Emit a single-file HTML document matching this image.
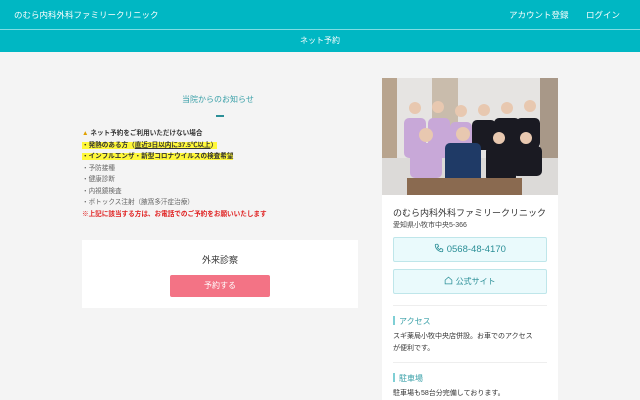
<!DOCTYPE html>
<html><head><meta charset="utf-8"><style>
*{margin:0;padding:0;box-sizing:border-box}
body{width:640px;height:400px;overflow:hidden;background:#f4f4f4;font-family:"Liberation Sans","Noto Sans CJK JP",sans-serif;color:#333}
.h1{position:absolute;left:0;top:0;width:640px;height:29px;background:#00b7c3;color:#fff;font-size:8.5px}
.h2{position:absolute;left:0;top:30px;width:640px;height:22px;background:#00b7c3;color:#fff;font-size:8px;text-align:center;line-height:22px}
.line{position:absolute;left:0;top:29px;width:640px;height:1px;background:#7fdde3}
.t{position:absolute;white-space:nowrap}
.notice{position:absolute;left:82px;top:128px;font-size:6.6px;line-height:11.5px;width:290px;font-weight:bold}
.hl{background:#fff83a}
.card{position:absolute;background:#fff}
.btn{position:absolute;left:393px;width:154px;height:25px;background:#eafafc;border:1px solid #bfe6ea;border-radius:2px;color:#2b8f97;text-align:center;line-height:23px}
</style></head><body>
<div class="h1"><span class="t" style="left:14px;top:9px">のむら内科外科ファミリークリニック</span><span class="t" style="left:509px;top:9px;font-size:8.5px">アカウント登録</span><span class="t" style="left:586px;top:9px;font-size:8.5px">ログイン</span></div>
<div class="line"></div>
<div class="h2">ネット予約</div>
<div class="t" style="left:182px;top:94px;font-size:8px;color:#3aa0a8">当院からのお知らせ</div>
<div style="position:absolute;left:216px;top:115px;width:8px;height:1.5px;background:#2b8f97"></div>
<div class="notice">
<div><span style="color:#e0a000">▲</span> ネット予約をご利用いただけない場合</div>
<div><span class="hl">・発熱のある方（<u>直近3日以内に37.5℃以上</u>）</span></div>
<div><span class="hl">・インフルエンザ・新型コロナウイルスの検査希望</span></div>
<div style="color:#666;font-weight:normal">・予防接種</div>
<div style="color:#666;font-weight:normal">・健康診断</div>
<div style="color:#666;font-weight:normal">・内視鏡検査</div>
<div style="color:#666;font-weight:normal">・ボトックス注射（腋窩多汗症治療）</div>
<div style="color:#e02020">※上記に該当する方は、お電話でのご予約をお願いいたします</div>
</div>
<div class="card" style="left:82px;top:240px;width:276px;height:68px"></div>
<div class="t" style="left:202px;top:253px;font-size:9px;color:#333">外来診察</div>
<div style="position:absolute;left:170px;top:275px;width:100px;height:22px;background:#f37385;border-radius:2px;color:#fff;font-size:8px;text-align:center;line-height:22px">予約する</div>
<div class="card" style="left:382px;top:78px;width:176px;height:322px"></div>
<svg style="position:absolute;left:382px;top:78px" width="176" height="117" viewBox="0 0 176 117">
<rect width="176" height="117" fill="#e6e4e2"/>
<rect x="0" y="0" width="15" height="80" fill="#b8a48e"/>
<rect x="50" y="0" width="26" height="80" fill="#c9bcac"/>
<rect x="158" y="0" width="18" height="117" fill="#a89888"/>
<rect x="0" y="80" width="176" height="37" fill="#dcdad8"/>
<g fill="#c8a8d8"><rect x="22" y="40" width="22" height="40" rx="5"/><rect x="46" y="40" width="22" height="40" rx="5"/><rect x="68" y="44" width="22" height="32" rx="5"/><rect x="28" y="65" width="32" height="35" rx="5"/></g>
<g fill="#1a1a22"><rect x="90" y="42" width="24" height="30" rx="5"/><rect x="112" y="40" width="26" height="30" rx="5"/><rect x="134" y="40" width="24" height="30" rx="5"/><rect x="104" y="68" width="30" height="36" rx="5"/><rect x="130" y="68" width="30" height="30" rx="5"/></g>
<rect x="63" y="65" width="36" height="52" rx="5" fill="#1f3a66"/>
<g fill="#e8c8b0"><circle cx="33" cy="30" r="6"/><circle cx="56" cy="29" r="6"/><circle cx="79" cy="33" r="6"/><circle cx="102" cy="32" r="6"/><circle cx="125" cy="30" r="6"/><circle cx="148" cy="28" r="6"/><circle cx="44" cy="57" r="7"/><circle cx="81" cy="56" r="7"/><circle cx="117" cy="60" r="6"/><circle cx="144" cy="60" r="6"/></g>
<rect x="25" y="100" width="115" height="17" fill="#8a6a50"/>
</svg>
<div class="t" style="left:393px;top:206px;font-size:9px;color:#333">のむら内科外科ファミリークリニック</div>
<div class="t" style="left:393px;top:220px;font-size:7px;color:#444">愛知県小牧市中央5-366</div>
<div class="btn" style="top:237px;font-size:9.5px"><svg width="10" height="10" viewBox="0 0 24 24" style="vertical-align:-1px" fill="none" stroke="#2b8f97" stroke-width="2"><path d="M5 3h4l2 5-3 2a11 11 0 0 0 6 6l2-3 5 2v4a2 2 0 0 1-2 2A17 17 0 0 1 3 5a2 2 0 0 1 2-2"/></svg>&nbsp;0568-48-4170</div>
<div class="btn" style="top:269px;font-size:8px"><svg width="9" height="9" viewBox="0 0 24 24" style="vertical-align:-1px" fill="none" stroke="#2b8f97" stroke-width="2"><path d="M3 11 12 3l9 8v10H3z"/></svg>&nbsp;公式サイト</div>
<div style="position:absolute;left:393px;top:305px;width:154px;height:1px;background:#eee"></div>
<div style="position:absolute;left:393px;top:316px;width:1.5px;height:9px;background:#7fcfd5"></div>
<div class="t" style="left:399px;top:316px;font-size:8px;color:#3aa0a8">アクセス</div>
<div class="t" style="left:393px;top:331px;font-size:7px;line-height:12px;color:#333">スギ薬局小牧中央店併設。お車でのアクセス<br>が便利です。</div>
<div style="position:absolute;left:393px;top:362px;width:154px;height:1px;background:#eee"></div>
<div style="position:absolute;left:393px;top:373px;width:1.5px;height:9px;background:#7fcfd5"></div>
<div class="t" style="left:399px;top:373px;font-size:8px;color:#3aa0a8">駐車場</div>
<div class="t" style="left:393px;top:388px;font-size:7px;color:#333">駐車場も58台分完備しております。</div>
</body></html>
